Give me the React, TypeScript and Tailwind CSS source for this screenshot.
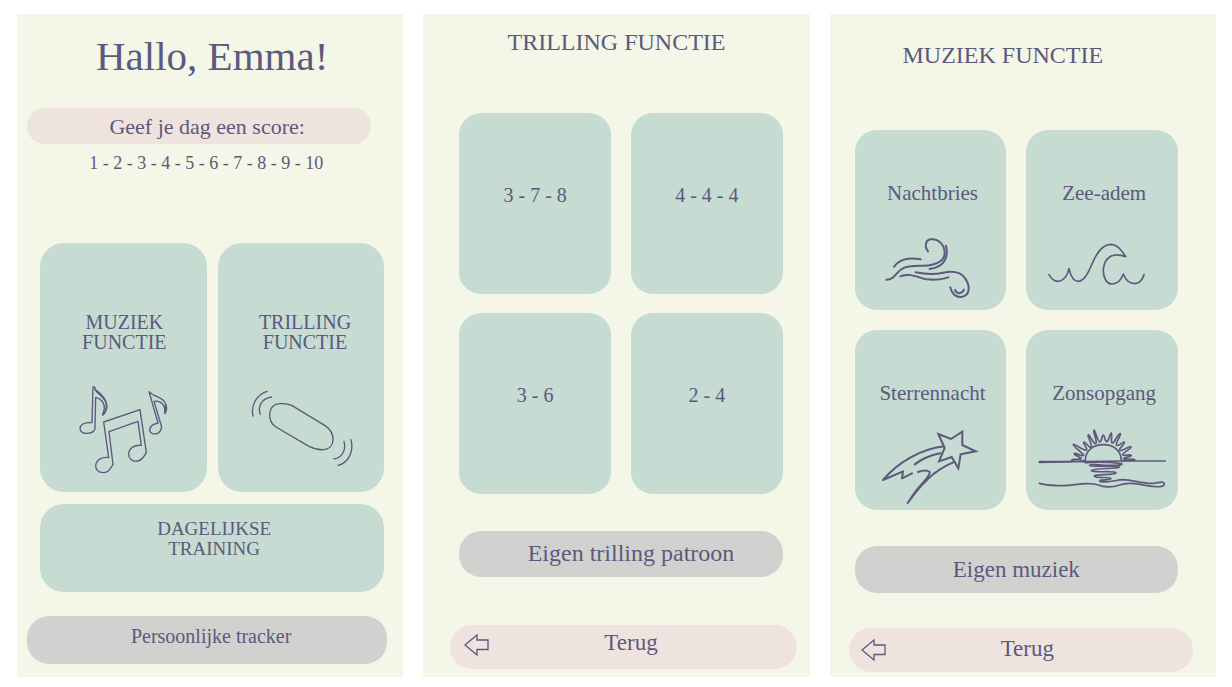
import type { ReactNode } from "react";

const stroke = {
  fill: "none",
  stroke: "#5c597c",
  strokeLinecap: "round" as const,
  strokeLinejoin: "round" as const,
  "aria-hidden": true,
};

function NotesIcon() {
  return (
    <svg {...stroke} viewBox="3 0 315 315" className="h-[105px] w-[105px] shrink-0" strokeWidth={4}>
      <path d="M69 36 L66 143 C45 141 31 148 30 160 C30 171 40 176 52 175 C65 174 74 168 75 160 L77 67 C94 70 105 86 103 101 L98 120 C108 110 112 97 109 85 C104 68 81 55 75 43 L74 36 Z" />
      <path d="M75 43 C90 54 112 74 110 95 C109 106 104 114 99 119" strokeWidth={5} />
      <path d="M237 50 L264 144 C249 147 239 155 239 167 C241 177 252 178 263 175 C269 172 273 165 275 156 L252 79 C270 75 283 88 284 101 L285 114 C291 105 291 92 284 81 C275 66 250 64 241 53 Z" />
      <path d="M285 114 C289 105 289 98 287 92" strokeWidth={6} />
      <path d="M101 141 L210 104 L229 232 C221 248 212 259 198 259 C185 259 176 250 176 237 C177 219 194 209 214 211 L204 139 L117 170 L129 268 C122 283 114 294 99 293 C85 292 77 283 77 272 C79 254 97 244 116 248 Z" />
    </svg>
  );
}

function VibrationIcon() {
  return (
    <svg {...stroke} viewBox="3 0 360 285" className="h-[95px] w-[120px] shrink-0" strokeWidth={4}>
      <path d="M155 76 L254 136 C271 147 280 163 279 181 C278 198 266 208 250 209 C235 210 221 206 207 199 L108 141 C94 132 88 117 89 101 C91 83 102 72 120 71 C133 70 144 71 155 76 Z" />
      <path d="M81 34 C53 43 31 72 39 108 M95 51 C69 54 51 76 61 103" />
      <path d="M312 184 C319 211 306 233 282 237 M333 179 C342 213 326 249 294 256" />
    </svg>
  );
}

function WindIcon() {
  return (
    <svg {...stroke} viewBox="0 3 303 225" className="h-[75px] w-[101px] shrink-0" strokeWidth={6}>
      <path d="M42 110 C57 88 84 81 122 88" />
      <path d="M19 149 C48 149 47 122 75 112 C101 104 131 110 156 104 C179 99 193 91 194 72 C195 45 176 25 151 28 C136 31 133 51 144 64" />
      <path d="M198 47 C205 77 198 110 149 117" />
      <path d="M61 139 C91 128 112 142 139 148 C160 150 184 150 205 142" />
      <path d="M107 127 C136 133 168 133 190 128 C219 122 239 124 254 143 C272 168 270 194 247 200 C228 204 215 191 211 172" />
      <path d="M225 180 C231 193 246 193 252 179" />
    </svg>
  );
}

function WaveIcon() {
  return (
    <svg {...stroke} viewBox="612 207 351 174" className="h-[58px] w-[117px] shrink-0" strokeWidth={5}>
      <path d="M627 314 C635 328 643 334 653 334 C669 333 682 320 687 296 C692 319 702 334 715 334 C733 333 744 310 756 282 C768 253 784 224 811 223 C832 223 844 240 857 260 C822 246 795 259 790 297 C789 323 800 342 816 342 C833 341 844 329 850 312 C858 332 870 341 884 341 C898 340 907 330 912 314" />
    </svg>
  );
}

function ShootingStarIcon() {
  return (
    <svg {...stroke} viewBox="30 177 300 240" className="h-20 w-[100px] shrink-0" strokeWidth={6}>
      <path strokeLinejoin="miter" d="M205 195 L243 210 L277 188 L277 228 L317 247 L272 256 L265 298 L245 264 L207 277 L224 237 Z" />
      <path d="M222 232 C151 241 84 279 39 333 L99 307 L96 328 L126 313" />
      <path d="M134 286 C155 270 181 259 211 253" />
      <path d="M144 309 C158 304 172 303 179 309 C182 321 154 344 134 371 L113 402 C139 366 165 335 193 313 C212 299 230 288 250 280" />
    </svg>
  );
}

function SunriseIcon() {
  return (
    <svg {...stroke} viewBox="-9 3 420 258" className="h-[86px] w-[140px] shrink-0" strokeWidth={5}>
      <path d="M13 113 L110 113 L147 113 L260 111 L391 111" />
      <path d="M13 115 L108 113" />
      <path d="M151 110 C150 81 174 62 205 62 C237 62 259 81 259 110" />
      <path d="M147 110 C136 113 113 112 110 108 C111 103 131 108 139 104 C136 98 115 94 118 88 C124 87 140 98 146 94 C144 86 111 67 115 61 C121 60 148 83 155 78 C158 72 142 57 147 54 C153 54 164 76 169 68 C172 60 155 34 160 32 C166 35 177 64 183 58 C187 49 172 22 177 18 C182 20 188 56 195 54 C202 50 200 33 205 33 C210 35 208 53 216 53 C223 49 223 30 229 27 C233 32 225 53 232 57 C240 55 247 30 256 29 C258 37 239 57 245 64 C252 68 263 52 268 54 C270 61 250 74 254 79 C263 84 282 64 288 69 C287 77 261 86 263 92 C268 98 285 89 289 94 C287 101 267 99 266 104 C273 109 293 102 300 108 C292 112 270 108 261 110" />
      <path d="M150 116 C181 114 230 115 260 119 C266 125 237 124 216 124 C197 123 166 119 164 124 C167 131 250 122 253 129 C248 136 172 131 169 140 C176 148 240 138 243 147 C238 155 175 149 178 157 C185 164 227 157 228 164 C225 170 192 165 194 172 C203 178 241 169 263 167 C296 168 325 180 354 178 C371 177 391 168 387 183 C382 191 354 188 331 184 C295 176 273 175 251 184 C232 191 205 190 190 183 C155 170 112 187 76 185 C52 184 32 184 13 178" />
    </svg>
  );
}

function BackArrowIcon() {
  return (
    <svg {...stroke} viewBox="0 0 25 22" className="h-[22px] w-[25px] shrink-0" strokeLinejoin="miter" strokeWidth={1.3}>
      <path d="M1 11 L13 1 V6 H24 V15.5 H13 V21 Z" />
    </svg>
  );
}

function Screen({ className, children }: { className: string; children: ReactNode }) {
  return (
    <section className={`flex min-w-[330px] flex-1 flex-col bg-[#f4f6e7] ${className}`}>{children}</section>
  );
}

function BackButton({ className, labelClass }: { className: string; labelClass: string }) {
  return (
    <button type="button" className={`flex h-11 items-center rounded-[22px] bg-[#efe3df] pr-6 text-[23px] ${className}`}>
      <BackArrowIcon />
      <span className={`flex-1 text-center ${labelClass}`}>Terug</span>
    </button>
  );
}

const patterns = ["3 - 7 - 8", "4 - 4 - 4", "3 - 6", "2 - 4"];

const sounds = [
  { name: "Nachtbries", icon: <WindIcon /> },
  { name: "Zee-adem", icon: <WaveIcon /> },
  { name: "Sterrennacht", icon: <ShootingStarIcon /> },
  { name: "Zonsopgang", icon: <SunriseIcon /> },
];

export default function App() {
  return (
    <main className="flex flex-wrap gap-5 bg-white pt-3.5 pr-4 pb-2.5 pl-[17px] font-['Liberation_Serif',serif] text-[#5c597c]">
      <Screen className="pt-[18px] pb-[13px]">
        <h1 className="pl-1 text-center text-[41px] leading-[48px]">Hallo, Emma!</h1>
        <h2 className="mt-7 mr-8 ml-2.5 h-9 rounded-[18px] bg-[#efe3df] pl-4 text-center text-[22px] leading-[38px]">
          Geef je dag een score:
        </h2>
        <p className="mt-[7px] pr-2 text-center text-lg leading-6">1 - 2 - 3 - 4 - 5 - 6 - 7 - 8 - 9 - 10</p>
        <div className="mt-[68px] mr-[19px] ml-[23px] grid grid-cols-2 gap-x-[11px] gap-y-3">
          <button type="button" className="flex h-[249px] flex-col items-center rounded-3xl bg-[#c6dbd2] pt-[69px] text-xl leading-5">
            <span className="pl-0.5">MUZIEK<br />FUNCTIE</span>
            <span className="mt-[23px]"><NotesIcon /></span>
          </button>
          <button type="button" className="flex h-[249px] flex-col items-center rounded-3xl bg-[#c6dbd2] pt-[69px] text-xl leading-5">
            <span className="pl-2">TRILLING<br />FUNCTIE</span>
            <span className="mt-7"><VibrationIcon /></span>
          </button>
          <button type="button" className="col-span-2 flex h-[88px] justify-center rounded-3xl bg-[#c6dbd2] pt-[15px] pl-1 text-[19px] leading-5">
            <span>DAGELIJKSE<br />TRAINING</span>
          </button>
        </div>
        <button type="button" className="mt-6 mr-4 ml-2.5 h-12 rounded-[22px] bg-[#d1d1cf] pb-2 pl-2 text-xl">
          Persoonlijke tracker
        </button>
      </Screen>

      <Screen className="pt-3 pb-2">
        <h2 className="text-center text-2xl leading-8">TRILLING FUNCTIE</h2>
        <div className="mt-[55px] mr-[27px] ml-9 grid grid-cols-2 gap-x-5 gap-y-[19px]">
          {patterns.map((pattern) => (
            <button key={pattern} type="button" className="flex h-[181px] justify-center rounded-[22px] bg-[#c6dbd2] pt-[70px] text-xl leading-6">
              {pattern}
            </button>
          ))}
        </div>
        <button type="button" className="mt-[37px] mr-[27px] ml-9 h-[46px] rounded-[22px] bg-[#d1d1cf] pb-0.5 pl-5 text-2xl">
          Eigen trilling patroon
        </button>
        <BackButton className="mt-12 mr-[13px] ml-[27px] pb-1 pl-3.5" labelClass="pb-1" />
      </Screen>

      <Screen className="pt-[25px] pb-[5px]">
        <h2 className="pr-10 text-center text-2xl leading-8">MUZIEK FUNCTIE</h2>
        <div className="mt-[59px] mr-[38px] ml-[25px] grid grid-cols-2 gap-5">
          {sounds.map((sound) => (
            <button key={sound.name} type="button" className="flex h-[180px] flex-col items-center rounded-[22px] bg-[#c6dbd2] pt-[51px] text-[21px] leading-6">
              <span className="pl-1">{sound.name}</span>
              <span className="flex h-[105px] items-center justify-center pt-[21px]">{sound.icon}</span>
            </button>
          ))}
        </div>
        <button type="button" className="mt-9 mr-[38px] ml-[25px] h-[47px] rounded-[22px] bg-[#d1d1cf] pt-0.5 text-[23px]">
          Eigen muziek
        </button>
        <BackButton className="mt-[35px] mr-[23px] ml-[19px] pl-3" labelClass="pb-0.5" />
      </Screen>
    </main>
  );
}
